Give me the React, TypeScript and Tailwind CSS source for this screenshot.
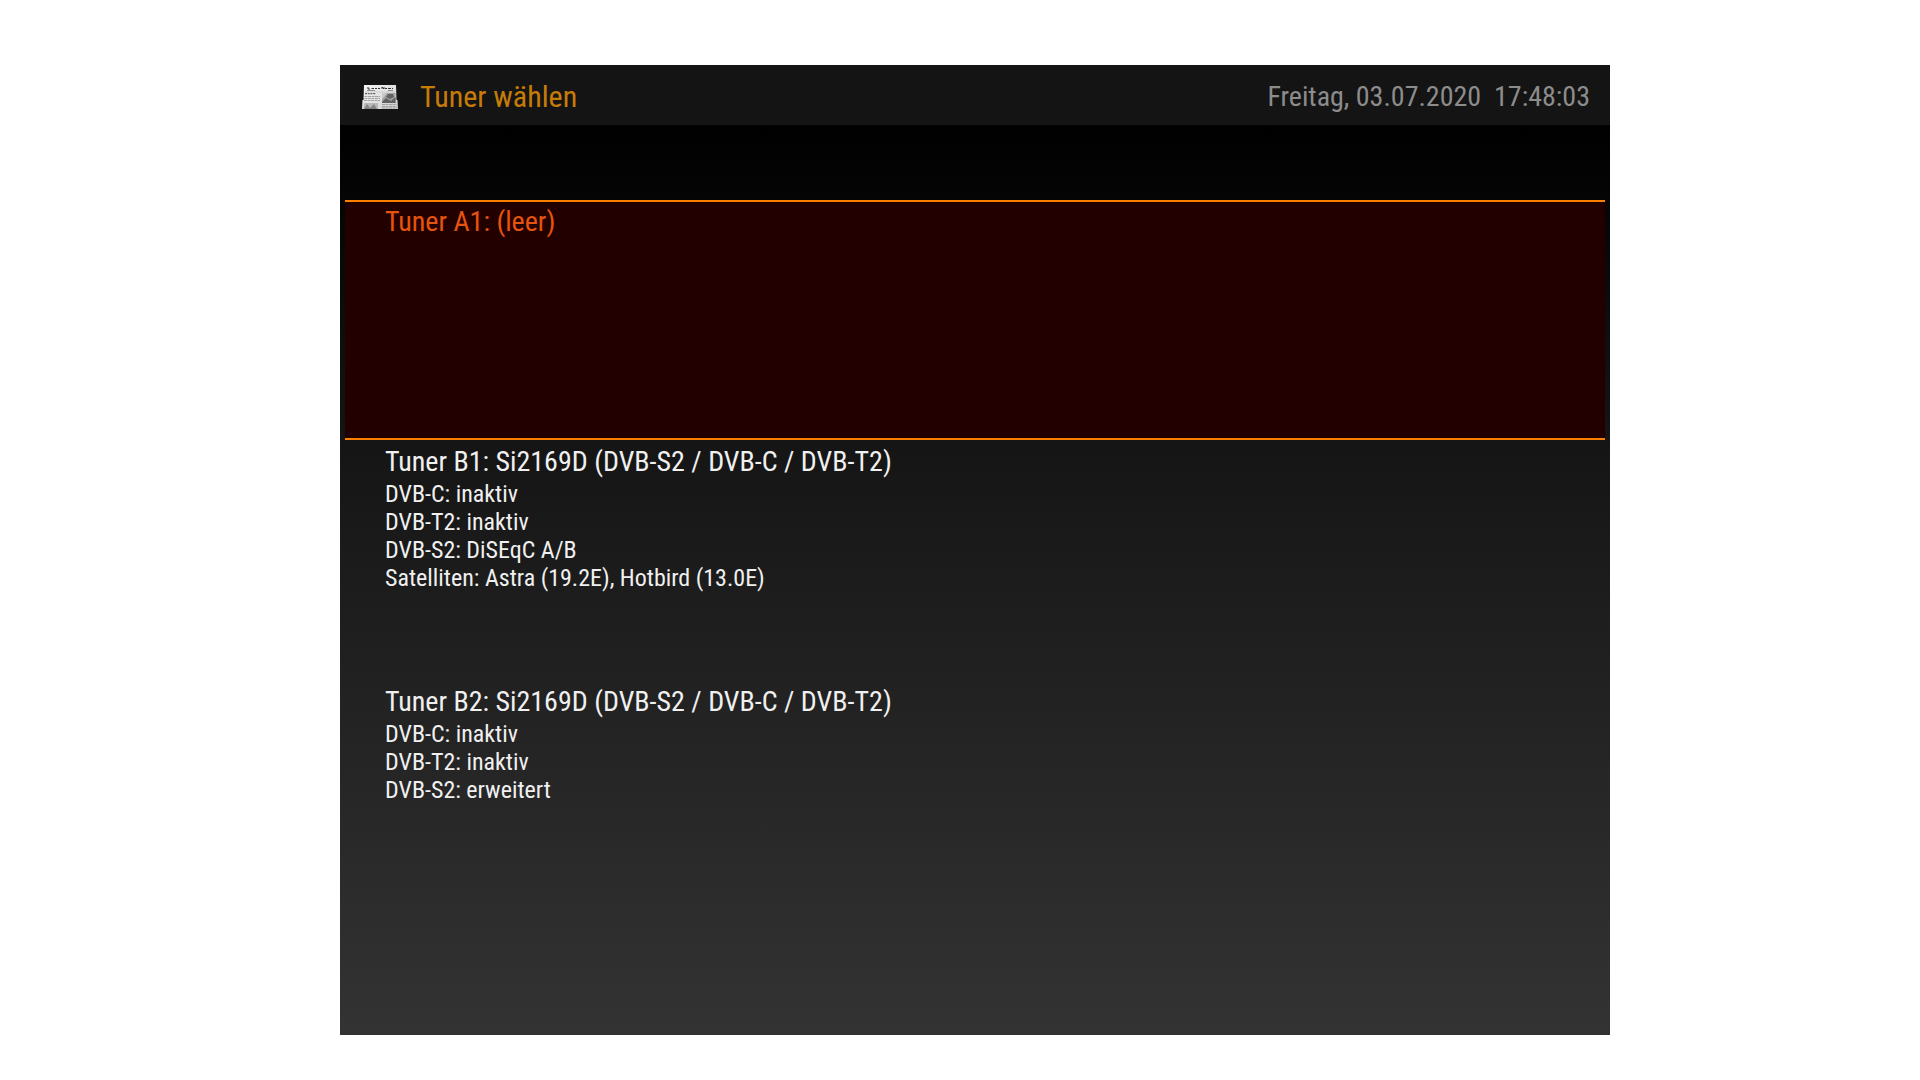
import React, { useState } from 'react';
import clsx from 'clsx';

interface Tuner {
  id: string;
  title: string;
  details: string[];
}

const tuners: Tuner[] = [
  { id: 'a1', title: 'Tuner A1: (leer)', details: [] },
  {
    id: 'b1',
    title: 'Tuner B1: Si2169D (DVB-S2 / DVB-C / DVB-T2)',
    details: [
      'DVB-C: inaktiv',
      'DVB-T2: inaktiv',
      'DVB-S2: DiSEqC A/B',
      'Satelliten: Astra (19.2E), Hotbird (13.0E)',
    ],
  },
  {
    id: 'b2',
    title: 'Tuner B2: Si2169D (DVB-S2 / DVB-C / DVB-T2)',
    details: ['DVB-C: inaktiv', 'DVB-T2: inaktiv', 'DVB-S2: erweitert'],
  },
];

const NewspaperIcon = () => (
  <svg viewBox="0 0 36 24" className="h-6 w-9 shrink-0" aria-hidden="true">
    <defs>
      <linearGradient id="paper" x1="0" y1="0" x2="1" y2="1">
        <stop offset="0" stopColor="#f4f4f4" />
        <stop offset="1" stopColor="#cfcfcf" />
      </linearGradient>
    </defs>
    <path d="M2 0H34L34.5 15H35.5L36 24H0L.5 15H1.5Z" fill="url(#paper)" />
    {/* masthead */}
    <path d="M6 2V4H8M9.5 3.5H12M13 3.5H15M16 3.5H18M20 4V2L22 4V2M23 3.5H25M26 3.5H29M30 3.5H31" fill="none" stroke="#333" strokeWidth="1" />
    <path d="M5 5.5H13M26 5.5H31" stroke="#777" strokeWidth=".8" />
    <path d="M3 7H33" stroke="#bbb" strokeWidth=".6" />
    {/* columns */}
    <path d="M3 8.7H14" stroke="#666" strokeWidth="1.2" strokeDasharray="2 .7" />
    <path d="M2.5 11.5H18M2.5 13.5H18M2 15.5H18M20 19.5H34.5M20 21.5H34.5M20 23H35" stroke="#a0a0a0" strokeWidth="1" strokeDasharray="3 .5" />
    {/* photos */}
    <path d="M20 8H33.5V18H20Z" fill="#a2a2a2" />
    <path d="M20 17L24 13L29 16L33.5 12V18H20ZM26 9H31L32 12L28 14L24 12Z" fill="#626262" />
    <path d="M20 8H25L22 12L20 14Z" fill="#c9c9c9" />
    <path d="M2 18H16V24H1.5Z" fill="#b8b8b8" />
    <path d="M2 24L5 19L8 23L12 19L15 24Z" fill="#858585" />
  </svg>
);

const TunerRow = ({ tuner, selected, onSelect }: { tuner: Tuner; selected: boolean; onSelect: () => void }) => (
  <button
    type="button"
    aria-pressed={selected}
    onClick={onSelect}
    className={clsx(
      'flex min-h-60 w-full flex-col items-start justify-start border-y-2 px-10 pt-1 text-left outline-none',
      selected ? 'border-[#ff8000] bg-[#230000] text-[#e5540c]' : 'border-transparent text-[#f0f0f0]'
    )}
  >
    <span className="mb-0.5 text-[28px] leading-8">{tuner.title}</span>
    {tuner.details.map((line) => (
      <span key={line} className="text-2xl leading-7">{line}</span>
    ))}
  </button>
);

export default function App() {
  const [selected, setSelected] = useState('a1');

  return (
    <div className="min-h-screen bg-white pt-[65px] pr-[310px] pb-[45px] pl-[340px] font-['Roboto_Condensed','Liberation_Sans_Narrow',sans-serif]">
      <main className="bg-[#141414]">
        <header className="flex h-15 items-center justify-between pt-1 pr-5 pl-[22px]">
          <div className="flex items-center gap-[22px]">
            <NewspaperIcon />
            <h1 className="text-[30px] leading-10 text-[#c77c08]">Tuner wählen</h1>
          </div>
          <time dateTime="2020-07-03T17:48:03" className="text-[28px] leading-10 whitespace-pre text-[#8c8c8c]">
            Freitag, 03.07.2020  17:48:03
          </time>
        </header>

        <section aria-label="Tuner" className="bg-linear-to-b/srgb from-black via-[#151515] via-35% to-[#333333] px-[5px] pt-[75px] pb-[115px]">
          {tuners.map((tuner) => (
            <TunerRow
              key={tuner.id}
              tuner={tuner}
              selected={selected === tuner.id}
              onSelect={() => setSelected(tuner.id)}
            />
          ))}
        </section>
      </main>
    </div>
  );
}
